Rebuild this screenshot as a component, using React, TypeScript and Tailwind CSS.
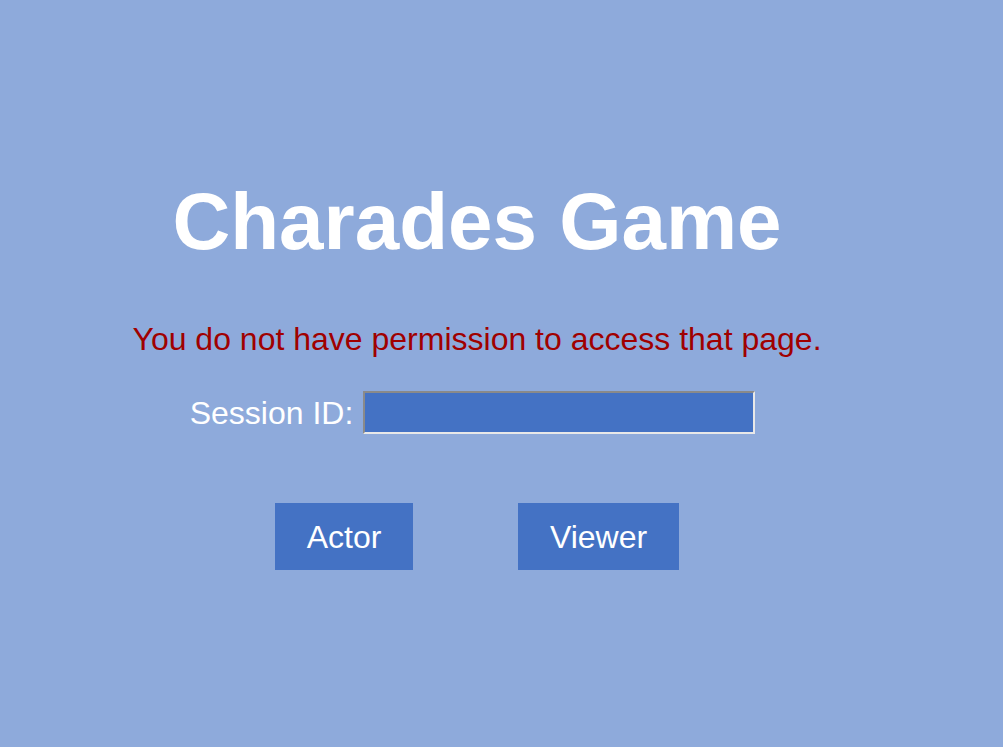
export default function App() {
  return (
    <div className="min-h-screen w-full bg-[#8eaadb] font-['Liberation_Sans',Arial,sans-serif]">
      <div className="w-[954px] flex flex-col items-center pt-[182px]">
        {/* Title */}
        <h1 className="text-[80px] font-bold leading-none text-white">Charades Game</h1>

        <p className="mt-[61px] text-[32px] leading-none text-[#a00000]">
          You do not have permission to access that page.
        </p>

        <div className="mt-[36px] pr-[9px] flex items-center gap-[10px]">
          <label className="text-[32px] leading-none text-white">Session ID:</label>
          <input
            type="text"
            className="w-[392px] h-[43px] bg-[#4472c4] border-2 border-t-[#8a8a8a] border-l-[#8a8a8a] border-b-[#e8e8e8] border-r-[#e8e8e8] outline-none"
          />
        </div>

        <div className="mt-[69px] flex gap-[105px]">
          <button className="w-[138px] h-[67px] bg-[#4472c4] text-white text-[32px]">Actor</button>
          <button className="w-[161px] h-[67px] bg-[#4472c4] text-white text-[32px]">Viewer</button>
        </div>
      </div>
    </div>
  )
}
